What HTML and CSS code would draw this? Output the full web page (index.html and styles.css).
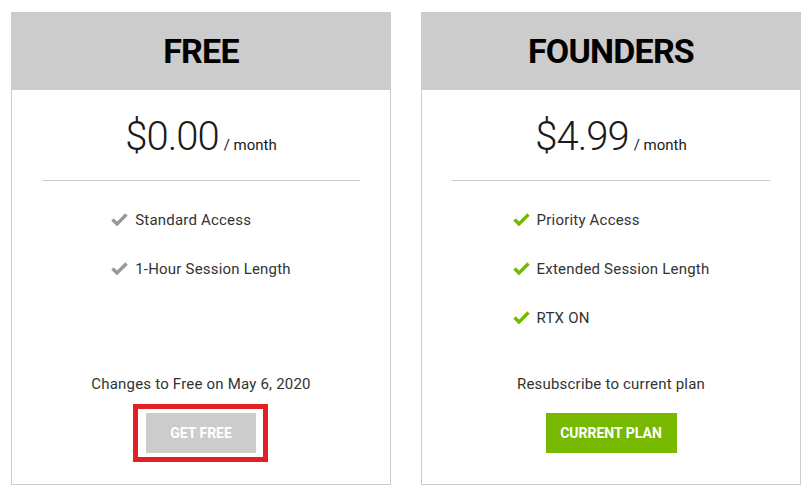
FILE: index.html
```html
<!DOCTYPE html>
<html>
<head>
<meta charset="utf-8">
<link rel="stylesheet" href="styles.css">
</head>
<body>
<div class="plans">
  <div class="card">
    <div class="card-head">FREE</div>
    <div class="price"><span class="amount">$0.00</span><span class="per">/ month</span></div>
    <div class="divider"></div>
    <ul class="features">
      <li><svg class="check gray" viewBox="0 0 17 13"><path d="M1.5 6.5 L6 11 L15.5 1.5"/></svg>Standard Access</li>
      <li><svg class="check gray" viewBox="0 0 17 13"><path d="M1.5 6.5 L6 11 L15.5 1.5"/></svg>1-Hour Session Length</li>
    </ul>
    <div class="spacer"></div>
    <p class="note">Changes to Free on May 6, 2020</p>
    <div class="action"><button class="btn btn-gray marked">GET FREE</button></div>
  </div>
  <div class="card">
    <div class="card-head">FOUNDERS</div>
    <div class="price"><span class="amount">$4.99</span><span class="per">/ month</span></div>
    <div class="divider"></div>
    <ul class="features">
      <li><svg class="check green" viewBox="0 0 17 13"><path d="M1.5 6.5 L6 11 L15.5 1.5"/></svg>Priority Access</li>
      <li><svg class="check green" viewBox="0 0 17 13"><path d="M1.5 6.5 L6 11 L15.5 1.5"/></svg>Extended Session Length</li>
      <li><svg class="check green" viewBox="0 0 17 13"><path d="M1.5 6.5 L6 11 L15.5 1.5"/></svg>RTX ON</li>
    </ul>
    <div class="spacer"></div>
    <p class="note">Resubscribe to current plan</p>
    <div class="action"><button class="btn btn-green">CURRENT PLAN</button></div>
  </div>
</div>
</body>
</html>
```

FILE: styles.css
```css
html, body {
  margin: 0;
  padding: 0;
  background: #ffffff;
}
body {
  font-family: Roboto, "Liberation Sans", sans-serif;
  color: #333333;
}
.plans {
  display: flex;
  gap: 30px;
  padding: 12px 0 0 11px;
}
.card {
  width: 378px;
  height: 471px;
  border: 1px solid #cccccc;
  display: flex;
  flex-direction: column;
}
.card-head {
  background: #cccccc;
  height: 78px;
  margin: -1px -1px 0 -1px;
  display: flex;
  align-items: center;
  justify-content: center;
  font-weight: 700;
  font-size: 34px;
  color: #000000;
  letter-spacing: -0.8px;
}
.price {
  display: flex;
  justify-content: center;
  align-items: baseline;
  margin-top: 22px;
  height: 50px;
  line-height: 50px;
  color: #1a1a1a;
}
.amount {
  font-weight: 300;
  font-size: 40px;
  letter-spacing: -1px;
}
.per {
  font-size: 15px;
  margin-left: 5px;
}
.divider {
  height: 1px;
  background: #cccccc;
  margin: 18px 30px 0 30px;
}
.features {
  list-style: none;
  margin: 14px auto 0 auto;
  padding: 0;
}
.features li {
  height: 49px;
  display: flex;
  align-items: center;
  font-size: 15px;
  letter-spacing: 0.2px;
  color: #333333;
}
.check {
  width: 17px;
  height: 13px;
  margin-right: 7px;
  fill: none;
  stroke-width: 3.4;
  stroke-linecap: butt;
  stroke-linejoin: miter;
}
.check.gray { stroke: #999999; }
.check.green { stroke: #76b900; }
.spacer { flex: 1; }
.note {
  margin: 0;
  text-align: center;
  font-size: 15px;
  line-height: 20px;
  letter-spacing: 0.2px;
  color: #333333;
}
.action {
  display: flex;
  justify-content: center;
  margin-top: 19px;
  margin-bottom: 31px;
}
.btn {
  border: none;
  height: 40px;
  padding: 0;
  white-space: nowrap;
  font-family: Roboto, "Liberation Sans", sans-serif;
  font-weight: 700;
  font-size: 14px;
  color: #ffffff;
  cursor: pointer;
}
.btn-gray {
  background: #cccccc;
  width: 110px;
}
.btn-green {
  background: #76b900;
  width: 131px;
}
.marked {
  position: relative;
}
.marked::after {
  content: "";
  position: absolute;
  top: -9px;
  bottom: -9px;
  left: -13px;
  right: -12px;
  border: 5px solid #e31e24;
}
```
